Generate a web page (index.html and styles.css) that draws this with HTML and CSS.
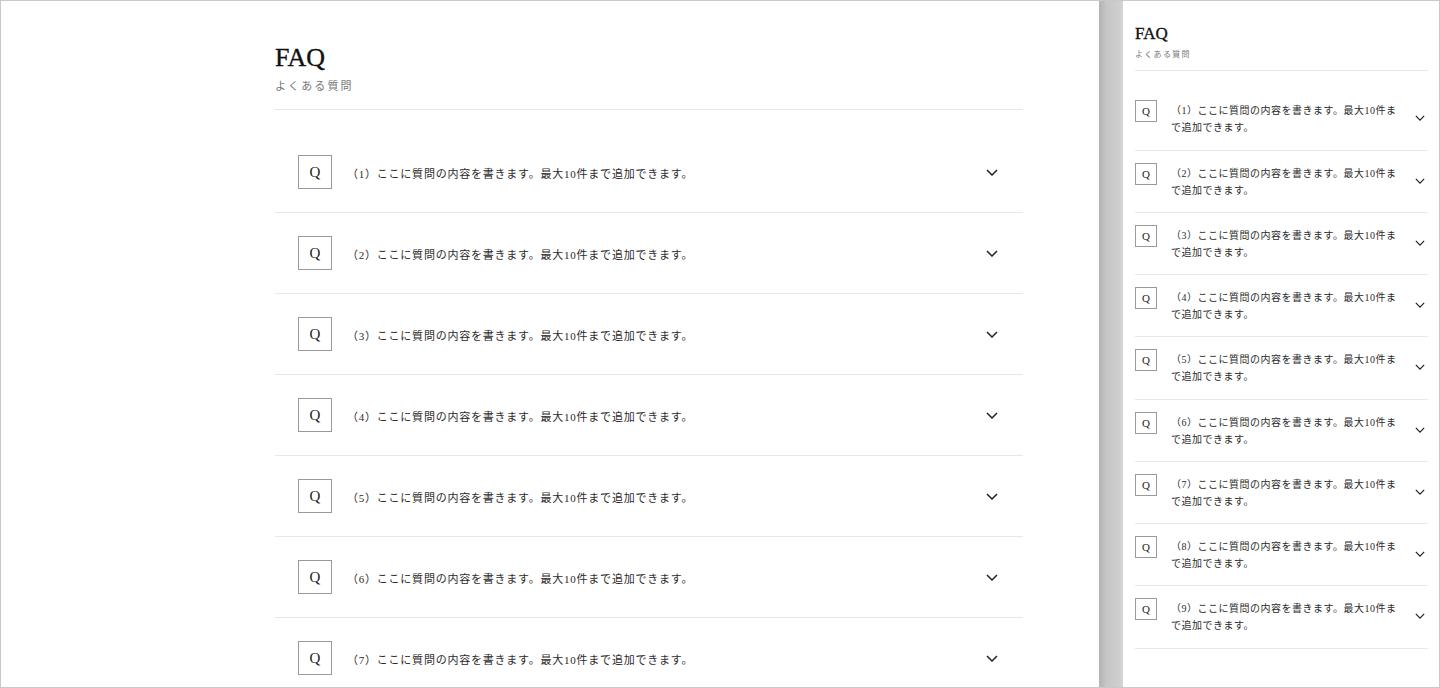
FILE: index.html
```html
<!DOCTYPE html>
<html lang="ja">
<head>
<meta charset="utf-8">
<title>FAQ</title>
<link rel="stylesheet" href="styles.css">
</head>
<body>
<div class="frame">
  <section class="panel panel--wide">
    <div class="faq">
      <header class="faq-head">
        <h1 class="faq-title">FAQ</h1>
        <p class="faq-sub">よくある質問</p>
      </header>
      <ul class="faq-list">
        <li class="faq-item"><span class="q-mark">Q</span><span class="q-text">（1）ここに質問の内容を書きます。最大10件まで追加できます。</span><svg class="chev" viewBox="0 0 12 7"><polyline points="1,1 6,6 11,1"/></svg></li>
        <li class="faq-item"><span class="q-mark">Q</span><span class="q-text">（2）ここに質問の内容を書きます。最大10件まで追加できます。</span><svg class="chev" viewBox="0 0 12 7"><polyline points="1,1 6,6 11,1"/></svg></li>
        <li class="faq-item"><span class="q-mark">Q</span><span class="q-text">（3）ここに質問の内容を書きます。最大10件まで追加できます。</span><svg class="chev" viewBox="0 0 12 7"><polyline points="1,1 6,6 11,1"/></svg></li>
        <li class="faq-item"><span class="q-mark">Q</span><span class="q-text">（4）ここに質問の内容を書きます。最大10件まで追加できます。</span><svg class="chev" viewBox="0 0 12 7"><polyline points="1,1 6,6 11,1"/></svg></li>
        <li class="faq-item"><span class="q-mark">Q</span><span class="q-text">（5）ここに質問の内容を書きます。最大10件まで追加できます。</span><svg class="chev" viewBox="0 0 12 7"><polyline points="1,1 6,6 11,1"/></svg></li>
        <li class="faq-item"><span class="q-mark">Q</span><span class="q-text">（6）ここに質問の内容を書きます。最大10件まで追加できます。</span><svg class="chev" viewBox="0 0 12 7"><polyline points="1,1 6,6 11,1"/></svg></li>
        <li class="faq-item"><span class="q-mark">Q</span><span class="q-text">（7）ここに質問の内容を書きます。最大10件まで追加できます。</span><svg class="chev" viewBox="0 0 12 7"><polyline points="1,1 6,6 11,1"/></svg></li>
        <li class="faq-item"><span class="q-mark">Q</span><span class="q-text">（8）ここに質問の内容を書きます。最大10件まで追加できます。</span><svg class="chev" viewBox="0 0 12 7"><polyline points="1,1 6,6 11,1"/></svg></li>
        <li class="faq-item"><span class="q-mark">Q</span><span class="q-text">（9）ここに質問の内容を書きます。最大10件まで追加できます。</span><svg class="chev" viewBox="0 0 12 7"><polyline points="1,1 6,6 11,1"/></svg></li>
      </ul>
    </div>
  </section>

  <div class="gutter"></div>

  <section class="panel panel--narrow">
    <div class="faq">
      <header class="faq-head">
        <h1 class="faq-title">FAQ</h1>
        <p class="faq-sub">よくある質問</p>
      </header>
      <ul class="faq-list">
        <li class="faq-item"><span class="q-mark">Q</span><span class="q-text">（1）ここに質問の内容を書きます。最大10件まで追加できます。</span><svg class="chev" viewBox="0 0 12 7"><polyline points="1,1 6,6 11,1"/></svg></li>
        <li class="faq-item"><span class="q-mark">Q</span><span class="q-text">（2）ここに質問の内容を書きます。最大10件まで追加できます。</span><svg class="chev" viewBox="0 0 12 7"><polyline points="1,1 6,6 11,1"/></svg></li>
        <li class="faq-item"><span class="q-mark">Q</span><span class="q-text">（3）ここに質問の内容を書きます。最大10件まで追加できます。</span><svg class="chev" viewBox="0 0 12 7"><polyline points="1,1 6,6 11,1"/></svg></li>
        <li class="faq-item"><span class="q-mark">Q</span><span class="q-text">（4）ここに質問の内容を書きます。最大10件まで追加できます。</span><svg class="chev" viewBox="0 0 12 7"><polyline points="1,1 6,6 11,1"/></svg></li>
        <li class="faq-item"><span class="q-mark">Q</span><span class="q-text">（5）ここに質問の内容を書きます。最大10件まで追加できます。</span><svg class="chev" viewBox="0 0 12 7"><polyline points="1,1 6,6 11,1"/></svg></li>
        <li class="faq-item"><span class="q-mark">Q</span><span class="q-text">（6）ここに質問の内容を書きます。最大10件まで追加できます。</span><svg class="chev" viewBox="0 0 12 7"><polyline points="1,1 6,6 11,1"/></svg></li>
        <li class="faq-item"><span class="q-mark">Q</span><span class="q-text">（7）ここに質問の内容を書きます。最大10件まで追加できます。</span><svg class="chev" viewBox="0 0 12 7"><polyline points="1,1 6,6 11,1"/></svg></li>
        <li class="faq-item"><span class="q-mark">Q</span><span class="q-text">（8）ここに質問の内容を書きます。最大10件まで追加できます。</span><svg class="chev" viewBox="0 0 12 7"><polyline points="1,1 6,6 11,1"/></svg></li>
        <li class="faq-item"><span class="q-mark">Q</span><span class="q-text">（9）ここに質問の内容を書きます。最大10件まで追加できます。</span><svg class="chev" viewBox="0 0 12 7"><polyline points="1,1 6,6 11,1"/></svg></li>
      </ul>
    </div>
  </section>
</div>
</body>
</html>
```

FILE: styles.css
```css
html, body {
  margin: 0;
  height: 100%;
}

body {
  font-family: "Liberation Serif", "Noto Sans CJK JP", serif;
  color: #222;
  background: #fff;
  overflow: hidden;
}

.frame {
  display: flex;
  height: 688px;
  box-sizing: border-box;
  border: 1px solid #c9c9c9;
  overflow: hidden;
}

.panel {
  background: #fff;
  overflow: hidden;
}

.panel--wide {
  flex: 1;
  padding-left: 274px;
}

.panel--narrow {
  width: 316px;
  flex: none;
  box-sizing: border-box;
  padding: 0 11px 0 12px;
}

.gutter {
  width: 24px;
  flex: none;
  background: linear-gradient(to right, #b2b2b2 0%, #c6c6c6 30%, #cdcdcd 80%, #d6d6d6 100%);
}

/* heading block */
.faq-title {
  margin: 0;
  font-weight: 400;
  line-height: 1.2;
  color: #111;
  -webkit-text-stroke: 0.35px #111;
}

.faq-sub {
  margin: 0;
  color: #777;
}

.faq-head {
  border-bottom: 1px solid #e6e6e6;
}

.faq-list {
  list-style: none;
  margin: 0;
  padding: 0;
}

.faq-item {
  display: flex;
  border-bottom: 1px solid #e8e8e8;
}

.q-mark {
  flex: none;
  box-sizing: border-box;
  display: flex;
  align-items: center;
  justify-content: center;
  border: 1px solid #9a9a9a;
  color: #222;
  font-family: "Liberation Serif", serif;
}

.q-text {
  color: #2b2b2b;
}

.chev {
  flex: none;
  fill: none;
  stroke: #222;
  stroke-width: 1.5;
}

/* wide layout */
.panel--wide .faq {
  width: 748px;
  padding-top: 41px;
}

.panel--wide .faq-title {
  font-size: 26px;
}

.panel--wide .faq-sub {
  margin-top: 5px;
  font-size: 11px;
  line-height: 16px;
  letter-spacing: 2.1px;
}

.panel--wide .faq-head {
  padding-bottom: 15px;
}

.panel--wide .faq-list {
  padding-top: 22px;
}

.panel--wide .faq-item {
  height: 80px;
  align-items: center;
  padding: 0 25px 0 23px;
}

.panel--wide .q-mark {
  width: 34px;
  height: 34px;
  font-size: 15px;
}

.panel--wide .q-text {
  flex: 1;
  margin-left: 15px;
  padding-top: 2px;
  font-size: 11px;
  letter-spacing: 0.07em;
}

.panel--wide .chev {
  width: 12px;
  height: 7px;
}

/* narrow layout */
.panel--narrow .faq {
  padding-top: 23px;
}

.panel--narrow .faq-title {
  font-size: 17px;
}

.panel--narrow .faq-sub {
  margin-top: 5px;
  font-size: 8px;
  line-height: 12px;
  letter-spacing: 1.3px;
}

.panel--narrow .faq-head {
  padding-bottom: 9px;
}

.panel--narrow .faq-list {
  padding-top: 17px;
}

.panel--narrow .faq-item {
  align-items: flex-start;
  padding: 12px 3px 13.25px 0;
}

.panel--narrow .q-mark {
  width: 22px;
  height: 22px;
  font-size: 11px;
}

.panel--narrow .q-text {
  flex: 1;
  margin-left: 14px;
  padding-top: 2px;
  font-size: 10px;
  line-height: 17px;
  letter-spacing: 0.05em;
}

.panel--narrow .chev {
  align-self: center;
  width: 10px;
  height: 6px;
  margin-left: 14px;
}
```
